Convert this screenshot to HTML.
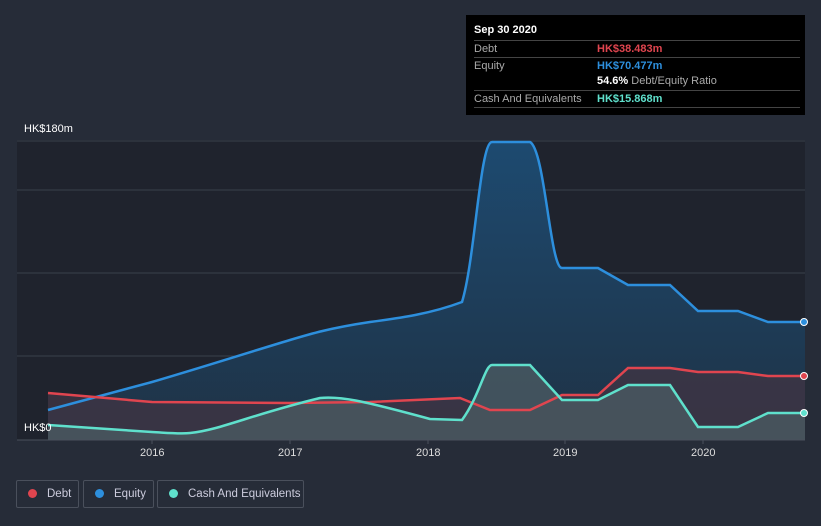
<!DOCTYPE html><html><head><style>
body{margin:0;width:821px;height:526px;background:#262c38;font-family:"Liberation Sans",sans-serif;overflow:hidden;position:relative}
.t{position:absolute;font-size:11px;color:#fff}
.tip{position:absolute;left:466px;top:15px;width:339px;height:100px;background:#000;}
.row{position:absolute;left:8px;width:326px;border-top:1px solid #444;font-size:11px;color:#aaa;height:16px;line-height:16px;white-space:nowrap}
.row b{font-weight:bold}
.leg{position:absolute;top:480px;height:28px;box-sizing:border-box;border:1px solid #4a505c;border-radius:2px;color:#ccd;font-size:11.5px;line-height:26px;white-space:nowrap}
.leg i{display:inline-block;width:9px;height:9px;border-radius:50%;margin:0 10px 0 11px;vertical-align:-1px}
</style></head><body>
<svg width="821" height="526" style="position:absolute;left:0;top:0">
<rect x="17" y="140" width="788" height="300" fill="#1f232d"/>
<g stroke="#3a404c" stroke-width="1"><line x1="17" y1="141" x2="805" y2="141"/><line x1="17" y1="190" x2="805" y2="190"/><line x1="17" y1="273" x2="805" y2="273"/><line x1="17" y1="356" x2="805" y2="356"/></g>
<defs><linearGradient id="g" x1="0" y1="0" x2="0" y2="1"><stop offset="0" stop-color="#1d4a70"/><stop offset="1" stop-color="#1f3245"/></linearGradient></defs>
<path d="M48,410 L152,382 C200,368 250,352 290,340 C310,334 330,328 370,322 C400,318 430,314 462,302 C475,260 480,142 492,142 L530,142 C545,150 550,268 562,268 L598,268 L628,285 L670,285 L698,311 L738,311 L768,322 L805,322 L805,440 L48,440Z" fill="url(#g)"/>
<path d="M48,393 L152,402 L290,403 L370,402 L460,398 L490,410 L530,410 L562,395 L598,395 L628,368 L670,368 L698,372 L738,372 L768,376 L805,376 L805,440 L48,440Z" fill="#3e3544" opacity="0.8"/>
<path d="M48,425 L152,432 C170,433 180,434 190,433 C220,430 250,415 320,398 C340,396 360,400 430,419 L462,420 C480,395 485,365 492,365 L530,365 L562,400 L598,400 L628,385 L670,385 L698,427 L738,427 L768,413 L805,413 L805,440 L48,440Z" fill="#4a5a62" opacity="0.8"/>
<path d="M48,410 L152,382 C200,368 250,352 290,340 C310,334 330,328 370,322 C400,318 430,314 462,302 C475,260 480,142 492,142 L530,142 C545,150 550,268 562,268 L598,268 L628,285 L670,285 L698,311 L738,311 L768,322 L805,322" fill="none" stroke="#2d8fdd" stroke-width="2.5"/>
<path d="M48,393 L152,402 L290,403 L370,402 L460,398 L490,410 L530,410 L562,395 L598,395 L628,368 L670,368 L698,372 L738,372 L768,376 L805,376" fill="none" stroke="#e0454f" stroke-width="2.5"/>
<path d="M48,425 L152,432 C170,433 180,434 190,433 C220,430 250,415 320,398 C340,396 360,400 430,419 L462,420 C480,395 485,365 492,365 L530,365 L562,400 L598,400 L628,385 L670,385 L698,427 L738,427 L768,413 L805,413" fill="none" stroke="#5fe0cc" stroke-width="2.5"/>
<line x1="17" y1="440" x2="805" y2="440" stroke="#4a505c"/>
<g stroke="#4a505c"><line x1="152" y1="440" x2="152" y2="444"/><line x1="290" y1="440" x2="290" y2="444"/><line x1="428" y1="440" x2="428" y2="444"/><line x1="565" y1="440" x2="565" y2="444"/><line x1="703" y1="440" x2="703" y2="444"/></g>
<circle cx="804" cy="322" r="3.5" fill="#2d8fdd" stroke="#fff"/><circle cx="804" cy="376" r="3.5" fill="#e0454f" stroke="#fff"/><circle cx="804" cy="413" r="3.5" fill="#5fe0cc" stroke="#fff"/>
</svg>
<div class="t" style="left:24px;top:123px">HK$180m</div>
<div class="t" style="left:24px;top:422px">HK$0</div>
<div class="t" style="left:140px;top:447px;color:#ddd">2016</div>
<div class="t" style="left:278px;top:447px;color:#ddd">2017</div>
<div class="t" style="left:416px;top:447px;color:#ddd">2018</div>
<div class="t" style="left:553px;top:447px;color:#ddd">2019</div>
<div class="t" style="left:691px;top:447px;color:#ddd">2020</div>
<div class="tip">
<div style="position:absolute;left:8px;top:9px;color:#fff;font-weight:bold;font-size:11px">Sep 30 2020</div>
<div class="row" style="top:25px">Debt<b style="position:absolute;left:123px;color:#e0454f">HK$38.483m</b></div>
<div class="row" style="top:42px">Equity<b style="position:absolute;left:123px;color:#2d8fdd">HK$70.477m</b></div>
<div class="row" style="top:58px;border:0"><span style="position:absolute;left:123px"><b style="color:#fff">54.6%</b> Debt/Equity Ratio</span></div>
<div class="row" style="top:75px">Cash And Equivalents<b style="position:absolute;left:123px;color:#5fe0cc">HK$15.868m</b></div>
<div class="row" style="top:92px;height:0"></div>
</div>
<div class="leg" style="left:16px;width:63px"><i style="background:#e0454f"></i>Debt</div>
<div class="leg" style="left:83px;width:71px"><i style="background:#2d8fdd"></i>Equity</div>
<div class="leg" style="left:157px;width:147px"><i style="background:#5fe0cc"></i>Cash And Equivalents</div>
</body></html>
